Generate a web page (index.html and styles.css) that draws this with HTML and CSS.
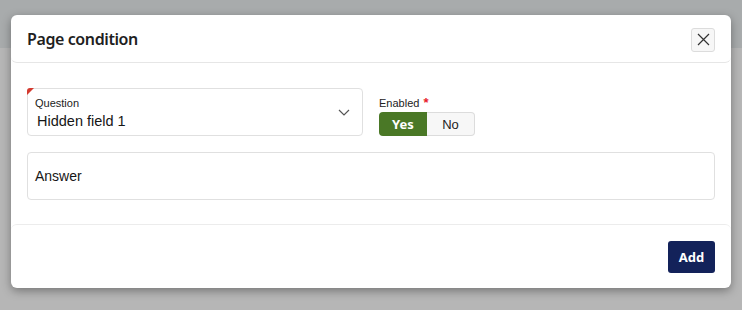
FILE: index.html
```html
<!DOCTYPE html>
<html lang="en">
<head>
<meta charset="utf-8">
<title>Page condition</title>
<link rel="stylesheet" href="styles.css">
</head>
<body>
<div class="backdrop">
  <div class="modal">
    <div class="modal-header">
      <h2 class="modal-title">Page condition</h2>
      <button class="close-btn" aria-label="Close">
        <svg width="13" height="13" viewBox="0 0 13 13"><path d="M1 1L12 12M12 1L1 12" stroke="#333" stroke-width="1.2" fill="none"/></svg>
      </button>
    </div>
    <div class="modal-body">
      <div class="row">
        <div class="field select-field">
          <span class="required-corner"></span>
          <div class="field-text">
            <span class="field-label">Question</span>
            <span class="field-value">Hidden field 1</span>
          </div>
          <svg class="chevron" width="12" height="7" viewBox="0 0 12 7"><path d="M1 1L6 6L11 1" stroke="#555" stroke-width="1.2" fill="none"/></svg>
        </div>
        <div class="toggle-group">
          <span class="toggle-label">Enabled <span class="asterisk">*</span></span>
          <div class="toggle">
            <span class="toggle-opt active">Yes</span>
            <span class="toggle-opt">No</span>
          </div>
        </div>
      </div>
      <div class="field answer-field">
        <span class="answer-text">Answer</span>
      </div>
    </div>
    <div class="modal-footer">
      <button class="add-btn">Add</button>
    </div>
  </div>
</div>
</body>
</html>
```
FILE: styles.css
```css
* { box-sizing: border-box; }
html, body { margin: 0; padding: 0; }
body {
  width: 742px;
  height: 310px;
  overflow: hidden;
  font-family: "Liberation Sans", Arial, sans-serif;
  color: #1e1e1e;
}
.backdrop {
  width: 742px;
  height: 310px;
  background: linear-gradient(to bottom, #a8abac 0, #a8abac 48px, #b6b6b6 48px, #b6b6b6 100%);
  padding: 15px 11px 0 11px;
}
.modal {
  width: 720px;
  height: 273px;
  background: #fff;
  border-radius: 6px;
  box-shadow: 0 3px 10px rgba(0,0,0,0.35);
  display: flex;
  flex-direction: column;
}
.modal-header {
  height: 48px;
  display: flex;
  align-items: center;
  justify-content: space-between;
  padding: 0 16px;
  border-bottom: 1px solid #e6e6e6;
  border-radius: 6px;
}
.modal-title {
  margin: 0;
  font-family: "Noto Sans", "Open Sans", sans-serif;
  font-weight: 600;
  font-size: 16px;
  letter-spacing: -0.4px;
  color: #1f1f1f;
}
.close-btn {
  width: 24px;
  height: 24px;
  padding: 0;
  border: 1px solid #dcdcdc;
  background: #f7f7f7;
  border-radius: 3px;
  display: flex;
  align-items: center;
  justify-content: center;
  margin-top: 2px;
}
.modal-body {
  flex: 1;
  padding: 25px 16px 24px 16px;
  display: flex;
  flex-direction: column;
  gap: 16px;
}
.row {
  display: flex;
  gap: 16px;
}
.field {
  height: 48px;
  border: 1px solid #e0e0e0;
  border-radius: 4px;
  background: #fff;
}
.select-field {
  width: 336px;
  position: relative;
  display: flex;
  align-items: center;
  justify-content: space-between;
  padding: 0 12px 0 7px;
}
.required-corner {
  position: absolute;
  top: -1px;
  left: -1px;
  width: 0;
  height: 0;
  border-top: 7px solid #d43a2f;
  border-right: 7px solid transparent;
  border-top-left-radius: 3px;
}
.field-text {
  display: flex;
  flex-direction: column;
  padding-top: 1px;
}
.field-label {
  font-size: 11px;
  line-height: 14px;
  color: #222;
}
.field-value {
  font-size: 14.5px;
  line-height: 18px;
  color: #161616;
  margin-top: 2px;
  margin-left: 2px;
}
.chevron {
  margin-top: 1px;
}
.toggle-group {
  display: flex;
  flex-direction: column;
  padding-top: 8px;
}
.toggle-label {
  font-size: 11px;
  line-height: 14px;
  color: #222;
  margin-bottom: 2px;
}
.asterisk {
  color: #e8202a;
  font-size: 13px;
  font-weight: bold;
  margin-left: 1px;
}
.toggle {
  display: flex;
  width: 96px;
  height: 24px;
}
.toggle-opt {
  width: 48px;
  height: 24px;
  display: flex;
  align-items: center;
  justify-content: center;
  font-size: 13px;
  background: #f7f7f7;
  color: #222;
  border: 1px solid #dcdcdc;
  border-left: none;
  border-radius: 0 4px 4px 0;
}
.toggle-opt.active {
  background: #4a7826;
  color: #fff;
  font-family: "Noto Sans", "Open Sans", sans-serif;
  font-weight: 700;
  border: none;
  border-radius: 4px 0 0 4px;
}
.answer-field {
  display: flex;
  align-items: center;
  padding: 0 7px;
}
.answer-text {
  font-size: 14px;
  color: #161616;
}
.modal-footer {
  height: 64px;
  border-top: 1px solid #ececec;
  border-radius: 6px;
  display: flex;
  justify-content: flex-end;
  align-items: flex-start;
  padding: 16px 16px 0 0;
}
.add-btn {
  width: 47px;
  height: 32px;
  border: none;
  border-radius: 3px;
  background: #13225a;
  color: #fff;
  font-family: "Noto Sans", "Open Sans", sans-serif;
  font-weight: 700;
  font-size: 13px;
  padding: 0;
}
```
